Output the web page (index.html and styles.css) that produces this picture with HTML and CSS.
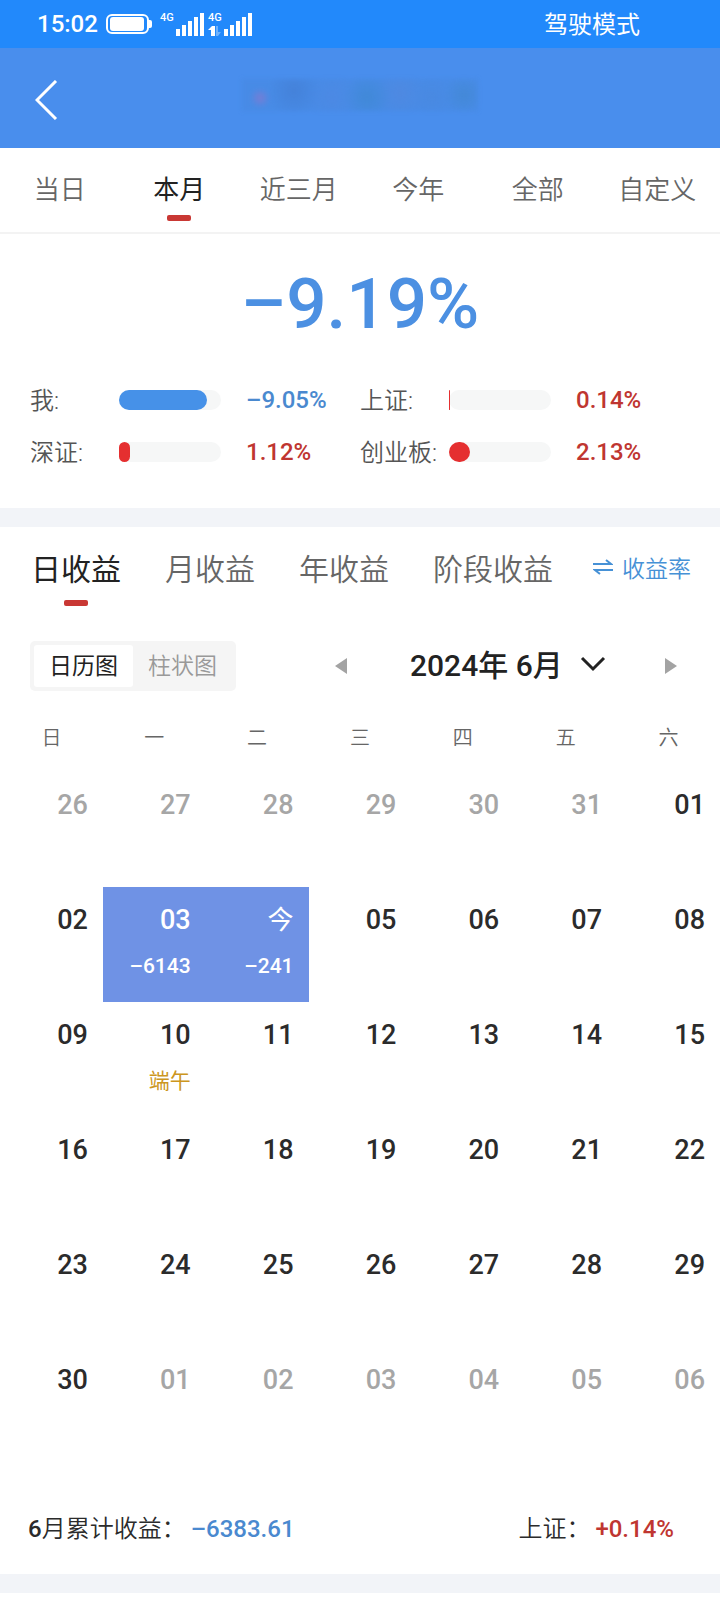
FILE: index.html
```
<!DOCTYPE html>
<html lang="zh-CN">
<head>
  <meta charset="UTF-8">
  <meta name="viewport" content="width=device-width, initial-scale=1.0">
  <title>收益日历</title>
  <link rel="stylesheet" href="styles.css">
</head>
<body>

  <div class="status-bar">
    <span class="time">15:02</span>
    <svg class="status-icons" width="148" height="28" viewBox="0 0 148 28" fill="#fff">
      <rect x="1" y="5" width="41" height="18" rx="5" fill="none" stroke="#fff" stroke-width="2"/>
      <rect x="4" y="7" width="34" height="14" rx="3"/>
      <path d="M43 10h1q2 0 2 2v4q0 2-2 2h-1z"/>
      <text x="54" y="11" class="net">4G</text>
      <path d="M70 19h4v7h-4zM76 15h4v11h-4zM82 11h4v15h-4zM88 7h4v19h-4zM94 3h4v23h-4z"/>
      <text x="102" y="11" class="net">4G</text>
      <path d="M102 20l4-4h3v10h-4v-6z"/>
      <path d="M110 16h2v6h3l-3 4h-2z" opacity=".35"/>
      <path d="M118 19h4v7h-4zM124 15h4v11h-4zM130 11h4v15h-4zM136 7h4v19h-4zM142 3h4v23h-4z"/>
    </svg>
    <span class="mode">驾驶模式</span>
  </div>

  <header class="header">
    <button class="back" aria-label="返回">
      <svg width="24" height="40" viewBox="0 0 24 40" fill="none" stroke="#fff" stroke-width="3">
        <path d="M21 1L2 20l19 19"/>
      </svg>
    </button>
    <div class="masked-name"></div>
  </header>

  <nav class="range-tabs">
    <button>当日</button>
    <button class="active">本月</button>
    <button>近三月</button>
    <button>今年</button>
    <button>全部</button>
    <button>自定义</button>
  </nav>

  <section class="overview">
    <div class="total">–9.19%</div>
    <div class="compare">
      <div class="item">
        <span class="label">我:</span>
        <div class="bar"><div class="fill blue" style="width: 86%"></div></div>
        <span class="value down">–9.05%</span>
      </div>
      <div class="item">
        <span class="label">上证:</span>
        <div class="bar"><div class="fill red" style="width: 1%"></div></div>
        <span class="value up">0.14%</span>
      </div>
      <div class="item">
        <span class="label">深证:</span>
        <div class="bar"><div class="fill red" style="width: 11%"></div></div>
        <span class="value up">1.12%</span>
      </div>
      <div class="item">
        <span class="label">创业板:</span>
        <div class="bar"><div class="fill red" style="width: 21%"></div></div>
        <span class="value up">2.13%</span>
      </div>
    </div>
  </section>

  <main class="profit">
    <nav class="profit-tabs">
      <button class="active">日收益</button>
      <button>月收益</button>
      <button>年收益</button>
      <button>阶段收益</button>
      <a href="#" class="switch">
        <svg width="20" height="16" viewBox="0 0 20 16" fill="none" stroke="currentColor" stroke-width="2">
          <path d="M0 5h18L13 1M20 11H2l5 4"/>
        </svg>
        收益率
      </a>
    </nav>

    <div class="toolbar">
      <div class="view-toggle">
        <button class="active">日历图</button>
        <button>柱状图</button>
      </div>
      <div class="month-picker">
        <button class="arrow" aria-label="上个月">
          <svg width="14" height="18" viewBox="0 0 14 18" fill="#a3a3a3"><path d="M13 1v16L1 9z"/></svg>
        </button>
        <div class="month">
          <select aria-label="月份">
            <option>2024年 6月</option>
          </select>
          <svg width="26" height="16" viewBox="0 0 26 16" fill="none" stroke="#222" stroke-width="3">
            <path d="M2 2l11 11L24 2"/>
          </svg>
        </div>
        <button class="arrow" aria-label="下个月">
          <svg width="14" height="18" viewBox="0 0 14 18" fill="#a3a3a3"><path d="M1 1v16l12-8z"/></svg>
        </button>
      </div>
    </div>

    <table class="calendar">
      <thead>
        <tr><th>日</th><th>一</th><th>二</th><th>三</th><th>四</th><th>五</th><th>六</th></tr>
      </thead>
      <tbody>
        <tr>
          <td class="other">26</td><td class="other">27</td><td class="other">28</td><td class="other">29</td><td class="other">30</td><td class="other">31</td><td>01</td>
        </tr>
        <tr>
          <td>02</td>
          <td class="loss">03<span class="amount">–6143</span></td>
          <td class="loss"><span class="today">今</span><span class="amount">–241</span></td>
          <td>05</td><td>06</td><td>07</td><td>08</td>
        </tr>
        <tr>
          <td>09</td>
          <td>10<span class="festival">端午</span></td>
          <td>11</td><td>12</td><td>13</td><td>14</td><td>15</td>
        </tr>
        <tr>
          <td>16</td><td>17</td><td>18</td><td>19</td><td>20</td><td>21</td><td>22</td>
        </tr>
        <tr>
          <td>23</td><td>24</td><td>25</td><td>26</td><td>27</td><td>28</td><td>29</td>
        </tr>
        <tr>
          <td>30</td><td class="other">01</td><td class="other">02</td><td class="other">03</td><td class="other">04</td><td class="other">05</td><td class="other">06</td>
        </tr>
      </tbody>
    </table>

    <div class="summary">
      <p><b>6</b>月累计收益：<span class="down">–6383.61</span></p>
      <p>上证：<span class="up">+0.14%</span></p>
    </div>
  </main>

</body>
</html>
```
FILE: styles.css
```
* {
  margin: 0;
  padding: 0;
  box-sizing: border-box;
}
body {
  background: #fff;
  color: #2b2b2b;
  font-family: Roboto, "Noto Sans CJK SC", sans-serif;
  font-size: 24px;
}
button, select {
  border: none;
  background: none;
  font: inherit;
  color: inherit;
  cursor: pointer;
}
svg {
  display: block;
}

/* Status bar */
.status-bar {
  display: flex;
  align-items: center;
  height: 48px;
  padding: 0 80px 0 37px;
  background: #2289fb;
  color: #fff;
}
.time {
  font-weight: 500;
}
.status-icons {
  margin-left: 8px;
}
.net {
  font-size: 11px;
  font-weight: 500;
}
.mode {
  margin-left: auto;
  padding-bottom: 3px;
}

/* Header */
.header {
  display: flex;
  align-items: center;
  height: 100px;
  padding: 4px 59px 0 35px;
  background: #498eed;
}
.back {
  width: 24px;
}
.masked-name {
  width: 236px;
  height: 32px;
  margin: 0 auto 10px;
  background:
    radial-gradient(circle at 18px 19px, rgba(150, 115, 200, 0.6), transparent 10px),
    radial-gradient(circle at 52px 12px, rgba(65, 120, 205, 0.5), transparent 26px),
    radial-gradient(circle at 90px 18px, rgba(80, 135, 225, 0.5), transparent 26px),
    radial-gradient(circle at 125px 18px, rgba(60, 135, 205, 0.6), transparent 24px),
    radial-gradient(circle at 158px 14px, rgba(85, 135, 220, 0.5), transparent 26px),
    radial-gradient(circle at 190px 18px, rgba(75, 135, 220, 0.5), transparent 20px),
    radial-gradient(circle at 222px 16px, rgba(65, 135, 205, 0.6), transparent 20px),
    rgba(70, 135, 220, 0.4);
  filter: blur(2px);
}

/* Range tabs */
.range-tabs {
  display: flex;
  height: 86px;
  padding-right: 3px;
  border-bottom: 2px solid #f3f3f3;
}
.range-tabs button {
  flex: 1;
  position: relative;
  padding-bottom: 5px;
  font-size: 26px;
  font-weight: 350;
  color: #666;
  white-space: nowrap;
}
.range-tabs .active {
  color: #222;
  font-weight: 400;
}
.active::after {
  content: "";
  position: absolute;
  left: 50%;
  bottom: 11px;
  width: 24px;
  height: 6px;
  margin-left: -12px;
  border-radius: 2px;
  background: #c93834;
}

/* Overview */
.overview {
  padding: 26px 30px 30px;
  border-bottom: 19px solid #f2f4f8;
}
.total {
  font-size: 71px;
  font-weight: 500;
  line-height: 88px;
  text-align: center;
  color: #4c90e2;
}
.compare {
  display: grid;
  grid-template-columns: 1fr 1fr;
  margin-top: 26px;
}
.item {
  display: flex;
  align-items: center;
  height: 52px;
}
.label {
  width: 89px;
  padding-bottom: 4px;
  font-weight: 350;
  color: #555;
  white-space: nowrap;
}
.bar {
  width: 102px;
  height: 20px;
  margin-right: 25px;
  border-radius: 10px;
  background: #f6f7f7;
}
.fill {
  height: 100%;
  border-radius: 10px;
}
.blue {
  background: #4691e8;
}
.red {
  background: #e52f30;
}
.value {
  font-weight: 500;
}
.down {
  color: #4a89cf;
}
.up {
  color: #bf3631;
}

/* Profit tabs */
.profit {
  border-bottom: 19px solid #f2f4f8;
}
.profit-tabs {
  display: flex;
  align-items: center;
  gap: 44px;
  height: 90px;
  padding: 0 28px 8px 31px;
}
.profit-tabs button {
  position: relative;
  height: 82px;
  padding-bottom: 2px;
  font-size: 30px;
  font-weight: 350;
  color: #666;
  white-space: nowrap;
}
.profit-tabs .active {
  font-weight: 400;
  color: #222;
}
.profit-tabs .active::after {
  bottom: 3px;
}
.switch {
  display: flex;
  align-items: center;
  gap: 9px;
  margin-left: -4px;
  padding-bottom: 2px;
  font-size: 23px;
  color: #4691d6;
  font-weight: 350;
  text-decoration: none;
  white-space: nowrap;
}
.switch svg {
  flex: none;
}

/* Toolbar */
.toolbar {
  display: flex;
  align-items: center;
  justify-content: space-between;
  height: 98px;
  padding: 0 42px 0 30px;
}
.view-toggle {
  display: flex;
  height: 50px;
  padding: 4px;
  border-radius: 5px;
  background: #f5f5f5;
}
.view-toggle button {
  width: 99px;
  padding-bottom: 4px;
  border-radius: 3px;
  font-size: 23px;
  font-weight: 350;
  color: #999;
}
.view-toggle .active {
  background: #fff;
  color: #222;
  font-weight: 400;
}
.view-toggle .active::after {
  display: none;
}
.month-picker {
  display: flex;
  align-items: center;
  justify-content: space-between;
  width: 344px;
}
.month {
  position: relative;
  margin-left: 2px;
}
.month select {
  width: 198px;
  padding: 0 0 2px 2px;
  appearance: none;
  font-size: 30px;
  font-weight: 500;
  color: #222;
}
.month svg {
  position: absolute;
  right: 0;
  top: 50%;
  margin-top: -10px;
  pointer-events: none;
}

/* Calendar */
.calendar {
  width: 100%;
  table-layout: fixed;
  border-collapse: collapse;
}
.calendar th {
  height: 57px;
  padding-bottom: 14px;
  font-size: 20px;
  font-weight: 350;
  color: #666;
}
.calendar td {
  height: 115px;
  padding: 16px 15px 0 0;
  vertical-align: top;
  text-align: right;
  font-size: 27px;
  font-weight: 500;
  line-height: 34px;
}
.calendar .other {
  color: #a6a6a6;
}
.calendar .loss {
  background: #6f92e5;
  color: #fff;
}
.today {
  display: block;
  height: 34px;
  font-size: 26px;
  font-weight: 400;
}
.amount, .festival {
  display: block;
  margin-top: 12px;
  font-size: 21px;
}
.festival {
  font-weight: 400;
  color: #cc9620;
}

/* Summary */
.summary {
  display: flex;
  justify-content: space-between;
  align-items: center;
  height: 112px;
  padding: 16px 46px 0 28px;
}
.summary p {
  font-weight: 350;
}
.summary b {
  font-weight: 500;
}
.summary span {
  margin-left: 5px;
  font-weight: 500;
}
```
